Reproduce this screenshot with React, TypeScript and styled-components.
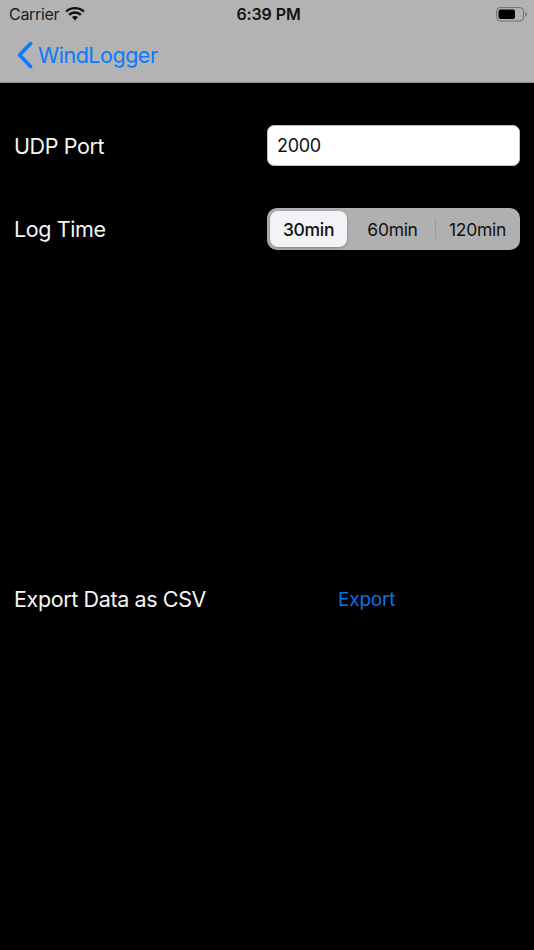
import React from "react";
import styled, { createGlobalStyle } from "styled-components";

const Global = createGlobalStyle`
  html, body { margin: 0; padding: 0; background: #000; }
  body { font-family: Inter, "Liberation Sans", sans-serif; }
`;

const Page = styled.div`
  width: 534px;
  height: 950px;
  background: #000;
  overflow: hidden;
  display: flex;
  flex-direction: column;
`;

const Header = styled.header`
  height: 82px;
  background: #b3b3b3;
  border-bottom: 1px solid #8f8f8f;
  display: flex;
  flex-direction: column;
`;

const StatusBar = styled.div`
  height: 28px;
  display: grid;
  grid-template-columns: 1fr auto 1fr;
  align-items: center;
  padding: 0 6px 0 9px;
  color: #111;
`;

const StatusLeft = styled.div`
  display: flex;
  align-items: center;
  gap: 6px;
  font-size: 16px;
  letter-spacing: -0.3px;
  color: #1c1c1c;
`;

const Time = styled.div`
  font-size: 16px;
  font-weight: 600;
  letter-spacing: -0.1px;
`;

const StatusRight = styled.div`
  display: flex;
  justify-content: flex-end;
`;

const NavBar = styled.nav`
  flex: 1;
  display: flex;
  align-items: center;
  gap: 4px;
  padding: 0 0 0 16px;
  margin-top: -1px;
`;

const BackLabel = styled.span`
  font-size: 21.5px;
  letter-spacing: -0.48px;
  color: #0a7aff;
`;

const Content = styled.main`
  display: flex;
  flex-direction: column;
  padding: 42px 14px 0;
`;

const Row = styled.div<{ $top?: number }>`
  display: flex;
  align-items: center;
  height: 41px;
  margin-top: ${(p) => p.$top ?? 0}px;
`;

const Label = styled.div`
  width: 253px;
  font-size: 21.5px;
  letter-spacing: -0.38px;
  color: #f5f5f5;
`;

const Field = styled.div`
  box-sizing: border-box;
  width: 253px;
  height: 41px;
  background: #fff;
  border: 1px solid #bdbdbd;
  border-radius: 7px;
  display: flex;
  align-items: center;
  padding-left: 9px;
  font-size: 18px;
  letter-spacing: -0.3px;
  color: #111;
`;

const Segmented = styled.div`
  box-sizing: border-box;
  width: 253px;
  height: 42px;
  margin-top: 1px;
  background: #b0b0b0;
  border-radius: 10px;
  padding: 3px;
  display: grid;
  grid-template-columns: 77px 88px 1fr;
  align-items: center;
`;

const Segment = styled.div<{ $active?: boolean; $divider?: boolean }>`
  position: relative;
  box-sizing: border-box;
  height: 36px;
  padding-left: ${(p) => (p.$active ? 0 : 3)}px;
  display: flex;
  align-items: center;
  justify-content: center;
  font-size: 17.5px;
  letter-spacing: -0.3px;
  font-weight: ${(p) => (p.$active ? 500 : 400)};
  color: #111;
  border-radius: 8px;
  background: ${(p) => (p.$active ? "#f2f2f7" : "transparent")};
  box-shadow: ${(p) => (p.$active ? "0 1px 3px rgba(0,0,0,0.25)" : "none")};
  ${(p) =>
    p.$divider
      ? `&::before { content: ""; position: absolute; left: 0; top: 8px; bottom: 8px; width: 1px; background: #9a9a9a; }`
      : ""}
`;

const ExportLink = styled.button`
  background: none;
  border: 0;
  padding: 2px 0 0;
  margin-left: 71px;
  font: inherit;
  font-size: 19px;
  letter-spacing: -0.2px;
  color: #0a72e6;
`;

const Wifi = () => (
  <svg width="20" height="15" viewBox="0 0 20 15" fill="#111">
    <path d="M10 2.2c3.2 0 6 1.2 8.1 3.2L19.7 3.7C17.1 1.3 13.7 0 10 0S2.9 1.3.3 3.7l1.6 1.7C4 3.4 6.8 2.2 10 2.2z" />
    <path d="M10 6.7c2 0 3.7.7 5 2l1.6-1.7C14.8 5.3 12.5 4.3 10 4.3S5.2 5.3 3.4 7L5 8.7c1.3-1.3 3-2 5-2z" />
    <path d="M10 8.9c-1.2 0-2.3.5-3.1 1.2L10 13.6l3.1-3.5c-.8-.7-1.9-1.2-3.1-1.2z" />
  </svg>
);

const Battery = () => (
  <svg width="32" height="15" viewBox="0 0 32 15">
    <rect x="0.6" y="0.6" width="27" height="13.4" rx="3.6" fill="none" stroke="#6f6f6f" strokeWidth="1" />
    <rect x="2.5" y="2.5" width="16.5" height="9.6" rx="2" fill="#000" />
    <path d="M29.4 5v4.6c.9-.3 1.5-1.2 1.5-2.3S30.3 5.3 29.4 5z" fill="#6f6f6f" />
  </svg>
);

const BackChevron = () => (
  <svg width="18" height="28" viewBox="0 0 18 28" fill="none">
    <path d="M14.6 2.6 3.6 14l11 11.4" stroke="#0a7aff" strokeWidth="3.6" strokeLinecap="round" strokeLinejoin="round" />
  </svg>
);

export default function App() {
  return (
    <Page>
      <Global />
      <Header>
        <StatusBar>
          <StatusLeft>
            Carrier
            <Wifi />
          </StatusLeft>
          <Time>6:39 PM</Time>
          <StatusRight>
            <Battery />
          </StatusRight>
        </StatusBar>
        <NavBar>
          <BackChevron />
          <BackLabel>WindLogger</BackLabel>
        </NavBar>
      </Header>
      <Content>
        <Row>
          <Label>UDP Port</Label>
          <Field>2000</Field>
        </Row>
        <Row $top={42}>
          <Label>Log Time</Label>
          <Segmented>
            <Segment $active>30min</Segment>
            <Segment>60min</Segment>
            <Segment $divider>120min</Segment>
          </Segmented>
        </Row>
        <Row $top={329}>
          <Label>Export Data as CSV</Label>
          <ExportLink>Export</ExportLink>
        </Row>
      </Content>
    </Page>
  );
}
